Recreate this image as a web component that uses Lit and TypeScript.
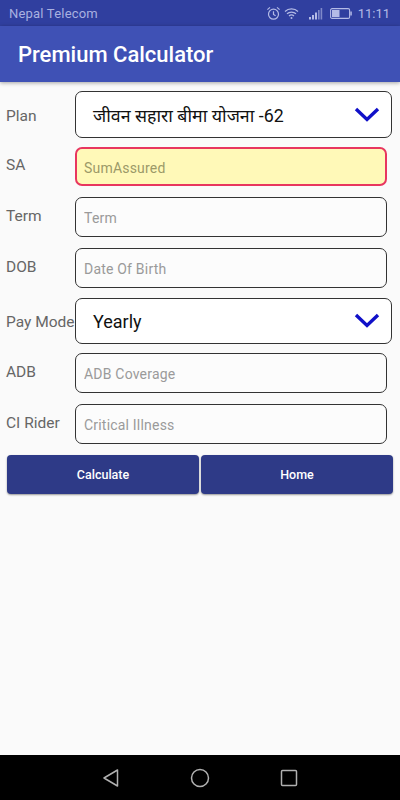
import { LitElement, html, css } from "lit";
import { customElement } from "lit/decorators.js";

const chevron = html`<svg class="chev" viewBox="0 0 26 16" width="26" height="16"><path d="M2 3 L13 13.5 L24 3" fill="none" stroke="#1010c8" stroke-width="3.4"/></svg>`;

@customElement("app-root")
export class AppRoot extends LitElement {
  static styles = css`
    :host { display: flex; flex-direction: column; width: 400px; height: 800px; background: #fafafa; font-family: Roboto, "Noto Sans", sans-serif; overflow: hidden; }
    .status { height: 26px; flex: none; background: #303f9f; display: flex; align-items: center; padding: 0 10px 0 9px; color: #a9b1e0; font-size: 13px; box-sizing: border-box; }
    .carrier { flex: 1; letter-spacing: 0.2px; }
    .status svg { display: block; flex: none; }
    .time { font-size: 13px; margin-left: 6px; color: #b4bbe6; }
    .icons { display: flex; align-items: center; gap: 3px; }
    .toolbar { height: 56px; flex: none; background: #3f51b5; display: flex; align-items: center; padding: 0 18px 0; box-sizing: border-box; color: #fff; font-size: 22px; font-weight: 500; box-shadow: 0 1px 4px rgba(0,0,0,.35); position: relative; }
    .form { flex: 1; padding: 9px 8px 0 6px; display: flex; flex-direction: column; }
    .row { display: grid; grid-template-columns: 69px 1fr; align-items: center; }
    .label { font-size: 15.5px; color: #666; white-space: nowrap; }
    .up1 { padding-bottom: 2px; }
    .up2 { padding-bottom: 4px; }
    .down1 { padding-top: 2px; }
    .field { box-sizing: border-box; width: 312px; height: 40px; border: 1.3px solid #333; border-radius: 7px; background: #fcfcfc; padding: 2px 8px 0; font: 14px Roboto, sans-serif; color: #222; outline: none; letter-spacing: 0.2px; }
    .field::placeholder { color: #9a9a9a; opacity: 1; }
    .field.err { height: 39px; border: 2px solid #e8365f; background: #fff9b8; padding-left: 7px; }
    .field.err::placeholder { color: #9c9a68; }
    .select { box-sizing: border-box; width: 317px; height: 47px; border: 1.3px solid #333; border-radius: 7px; background: #fff; display: flex; align-items: center; justify-content: space-between; padding: 0 11px 0 17px; font-size: 18px; color: #111; }
    .select.short { height: 46px; }
    .chev { display: block; margin-top: -2px; }
    .hi { font-size: 17.8px; }
    .g1 { margin-top: 9px; }
    .g2 { margin-top: 11px; }
    .g3 { margin-top: 10px; }
    .buttons { display: grid; grid-template-columns: 192px 192px; gap: 2px; margin: 11px 0 0 1px; }
    .btn { height: 39px; border: none; border-radius: 4px; background: #2e3a87; color: #fff; font: 500 12.5px Roboto, sans-serif; box-shadow: 0 1px 2px rgba(0,0,0,.4); padding: 0; }
    .nav { height: 45px; flex: none; background: #000; display: flex; align-items: center; justify-content: center; gap: 69px; }
    .nav svg { display: block; }
  `;

  private row(label: string, placeholder: string, cls = "g2", err = false) {
    return html`<div class="row ${cls}">
      <span class="label ${err ? "up2" : "up1"}">${label}</span>
      <input class="field ${err ? "err" : ""}" placeholder=${placeholder} />
    </div>`;
  }

  render() {
    return html`
      <div class="status">
        <span class="carrier">Nepal Telecom</span>
        <div class="icons">
          <svg width="15" height="15" viewBox="0 0 15 15" fill="none" stroke="#b4bbe6" stroke-width="1.2"><circle cx="7.5" cy="8.2" r="5"/><path d="M7.5 5.2V8.4L9.6 9.8M1.4 3.6L4 1.4M13.6 3.6L11 1.4"/></svg>
          <svg width="15" height="13" viewBox="0 0 15 13" fill="none" stroke="#b4bbe6" stroke-width="1.2"><path d="M1 4.5C4.5 1 10.5 1 14 4.5M3 6.8C5.4 4.5 9.6 4.5 12 6.8M5 9C6.4 7.8 8.6 7.8 10 9"/><circle cx="7.5" cy="11" r="1" fill="#b4bbe6" stroke="none"/></svg>
          <svg style="margin-left:7px" width="14" height="13" viewBox="0 0 14 13" fill="#b4bbe6"><rect x="0" y="10" width="2" height="2.5"/><rect x="3" y="8" width="2" height="4.5"/><rect x="6" y="5.5" width="2" height="7"/><rect x="9" y="3" width="1.6" height="9.5" opacity=".6"/><rect x="11.6" y="1" width="1.6" height="11.5" opacity=".6"/></svg>
          <svg style="margin-left:4px" width="22" height="11" viewBox="0 0 22 11"><rect x=".6" y=".6" width="19" height="9.8" rx="1.5" fill="none" stroke="#b4bbe6" stroke-width="1.1"/><rect x="2" y="2" width="7.5" height="7" fill="#b4bbe6"/><rect x="20.3" y="3.5" width="1.5" height="4" fill="#b4bbe6"/></svg>
        </div>
        <span class="time">11:11</span>
      </div>
      <div class="toolbar">Premium Calculator</div>
      <div class="form">
        <div class="row">
          <span class="label down1">Plan</span>
          <div class="select"><span class="hi">जीवन सहारा बीमा योजना -62</span>${chevron}</div>
        </div>
        ${this.row("SA", "SumAssured", "g1", true)}
        ${this.row("Term", "Term")}
        ${this.row("DOB", "Date Of Birth")}
        <div class="row g3">
          <span class="label down1">Pay Mode</span>
          <div class="select short"><span>Yearly</span>${chevron}</div>
        </div>
        ${this.row("ADB", "ADB Coverage", "g1")}
        ${this.row("CI Rider", "Critical Illness")}
        <div class="buttons">
          <button class="btn">Calculate</button>
          <button class="btn">Home</button>
        </div>
      </div>
      <div class="nav">
        <svg width="20" height="20" viewBox="0 0 20 20" fill="none" stroke="#b0b0b0" stroke-width="1.5" stroke-linejoin="round"><path d="M16.5 2V18L3 10Z"/></svg>
        <svg width="20" height="20" viewBox="0 0 20 20" fill="none" stroke="#b0b0b0" stroke-width="1.5"><circle cx="10" cy="10" r="8.5"/></svg>
        <svg width="20" height="20" viewBox="0 0 20 20" fill="none" stroke="#b0b0b0" stroke-width="1.5"><rect x="2.5" y="2.5" width="15" height="15" rx="1"/></svg>
      </div>
    `;
  }
}
